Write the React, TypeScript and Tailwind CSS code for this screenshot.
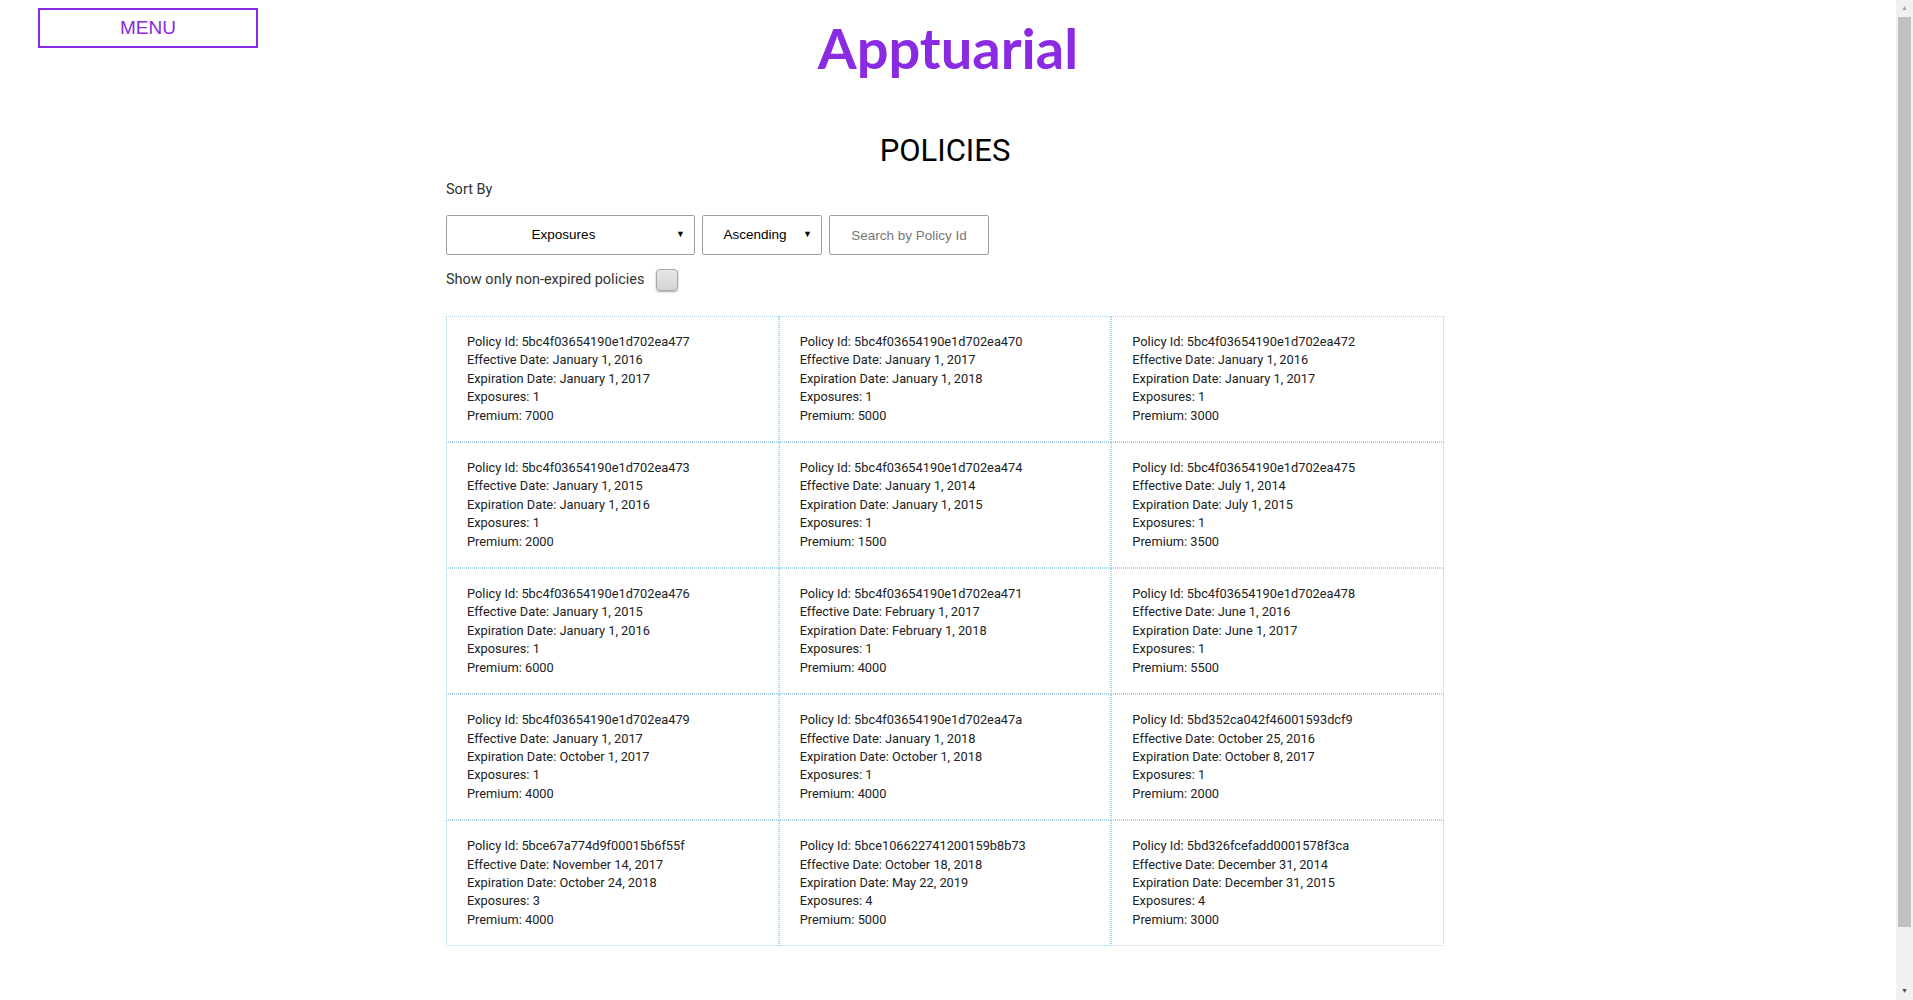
import React, { useState } from 'react';

interface Policy {
  id: string;
  effective: string;
  expiration: string;
  exposures: number;
  premium: number;
}

const policies: Policy[] = [
  { id: '5bc4f03654190e1d702ea477', effective: 'January 1, 2016', expiration: 'January 1, 2017', exposures: 1, premium: 7000 },
  { id: '5bc4f03654190e1d702ea470', effective: 'January 1, 2017', expiration: 'January 1, 2018', exposures: 1, premium: 5000 },
  { id: '5bc4f03654190e1d702ea472', effective: 'January 1, 2016', expiration: 'January 1, 2017', exposures: 1, premium: 3000 },
  { id: '5bc4f03654190e1d702ea473', effective: 'January 1, 2015', expiration: 'January 1, 2016', exposures: 1, premium: 2000 },
  { id: '5bc4f03654190e1d702ea474', effective: 'January 1, 2014', expiration: 'January 1, 2015', exposures: 1, premium: 1500 },
  { id: '5bc4f03654190e1d702ea475', effective: 'July 1, 2014', expiration: 'July 1, 2015', exposures: 1, premium: 3500 },
  { id: '5bc4f03654190e1d702ea476', effective: 'January 1, 2015', expiration: 'January 1, 2016', exposures: 1, premium: 6000 },
  { id: '5bc4f03654190e1d702ea471', effective: 'February 1, 2017', expiration: 'February 1, 2018', exposures: 1, premium: 4000 },
  { id: '5bc4f03654190e1d702ea478', effective: 'June 1, 2016', expiration: 'June 1, 2017', exposures: 1, premium: 5500 },
  { id: '5bc4f03654190e1d702ea479', effective: 'January 1, 2017', expiration: 'October 1, 2017', exposures: 1, premium: 4000 },
  { id: '5bc4f03654190e1d702ea47a', effective: 'January 1, 2018', expiration: 'October 1, 2018', exposures: 1, premium: 4000 },
  { id: '5bd352ca042f46001593dcf9', effective: 'October 25, 2016', expiration: 'October 8, 2017', exposures: 1, premium: 2000 },
  { id: '5bce67a774d9f00015b6f55f', effective: 'November 14, 2017', expiration: 'October 24, 2018', exposures: 3, premium: 4000 },
  { id: '5bce106622741200159b8b73', effective: 'October 18, 2018', expiration: 'May 22, 2019', exposures: 4, premium: 5000 },
  { id: '5bd326fcefadd0001578f3ca', effective: 'December 31, 2014', expiration: 'December 31, 2015', exposures: 4, premium: 3000 },
];

const PolicyCard: React.FC<{ policy: Policy }> = ({ policy }) => (
  <div className="border border-dotted border-[#a9d3e6] px-[20px] py-[16px] text-[12.8px] leading-[18.4px] text-[#222]">
    <div>Policy Id: {policy.id}</div>
    <div>Effective Date: {policy.effective}</div>
    <div>Expiration Date: {policy.expiration}</div>
    <div>Exposures: {policy.exposures}</div>
    <div>Premium: {policy.premium}</div>
  </div>
);

// browser scrollbar as it shows in the screenshot
const ScrollBar: React.FC = () => (
  <div className="sticky top-0 flex h-screen w-[17px] shrink-0 flex-col items-center self-start bg-[#f1f1f1]">
    <div className="flex h-[17px] items-center justify-center text-[7px] leading-none text-[#a3a3a3]">▲</div>
    <div className="mb-[56px] w-[13px] flex-1 bg-[#c1c1c1]" />
    <div className="flex h-[17px] items-center justify-center text-[7px] leading-none text-[#505050]">▼</div>
  </div>
);

const App: React.FC = () => {
  const [onlyActive, setOnlyActive] = useState(false);

  return (
    <div className="flex bg-white font-['Roboto',sans-serif]">
      <div className="min-h-[1047px] flex-1">
        {/* Header */}
        <div className="grid grid-cols-[1fr_auto_1fr] items-start">
          <div>
            <button className="ml-[38px] mt-[8px] flex h-[40px] w-[220px] items-center justify-center border-2 border-[#8a2be2] font-['Liberation_Sans',Arial,sans-serif] text-[19px] text-[#8a2be2]">
              MENU
            </button>
          </div>
          <h1 className="mt-[16px] font-['Lato',sans-serif] text-[56px] font-bold leading-[64px] text-[#8a2be2]">
            Apptuarial
          </h1>
          <div />
        </div>

        {/* Main */}
        <div className="mx-auto w-[1004px] pr-[6px]">
          <h2 className="mt-[53px] text-center text-[31px] leading-[36px] text-black">POLICIES</h2>

          <div className="mt-[12px] text-[14.5px] leading-[18px] text-[#333]">Sort By</div>

          <div className="mt-[16px] flex gap-[7px] font-['Liberation_Sans',Arial,sans-serif] text-[13.5px]">
            <div className="relative flex h-[40px] w-[249px] items-center justify-center rounded-[2px] border border-[#a0a0a0] pr-[14px] text-black">
              Exposures
              <span className="absolute right-[9px] text-[9px]">▼</span>
            </div>
            <div className="relative flex h-[40px] w-[120px] items-center justify-center rounded-[2px] border border-[#a0a0a0] pr-[14px] text-black">
              Ascending
              <span className="absolute right-[9px] text-[9px]">▼</span>
            </div>
            <input
              placeholder="Search by Policy Id"
              className="h-[40px] w-[160px] rounded-[2px] border border-[#a0a0a0] text-center text-[13.5px] outline-none placeholder:text-[#777]"
            />
          </div>

          <div className="mt-[14px] flex items-center gap-[12px]">
            <span className="text-[14.5px] text-[#333]">Show only non-expired policies</span>
            <button
              onClick={() => setOnlyActive(!onlyActive)}
              className="h-[22px] w-[22px] rounded-[4px] border border-[#a8a8a8] bg-gradient-to-b from-[#e6e6e6] to-[#d4d4d4] shadow-[0_1px_2px_rgba(0,0,0,0.35)]"
            />
          </div>

          <div className="mt-[25px] grid w-[998px] grid-cols-3">
            {policies.map(p => (
              <PolicyCard key={p.id} policy={p} />
            ))}
          </div>
        </div>
      </div>
      <ScrollBar />
    </div>
  );
};

export default App;
